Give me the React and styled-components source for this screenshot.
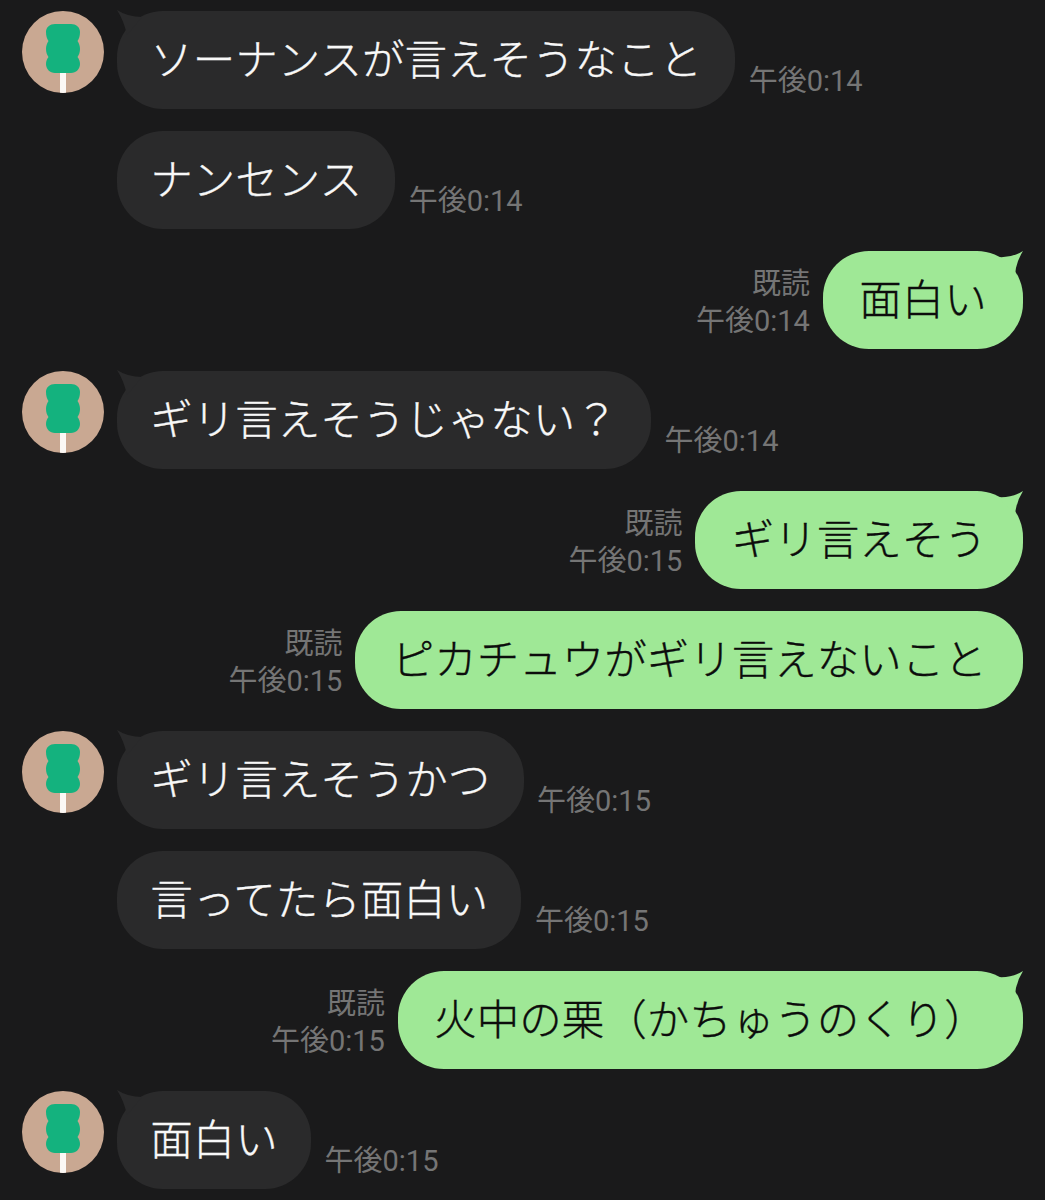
import React from "react";
import styled, { createGlobalStyle } from "styled-components";

const Global = createGlobalStyle`
  html, body { margin: 0; padding: 0; background: #1a1a1b; }
  body { font-family: "Noto Sans CJK JP", "Noto Sans", sans-serif; }
`;

const Chat = styled.div`
  width: 1045px;
  height: 1200px;
  overflow: hidden;
  box-sizing: border-box;
  padding: 11px 22px 0;
  display: flex;
  flex-direction: column;
  gap: 22px;
  background: #1a1a1b;
`;

const Row = styled.div`
  display: flex;
  height: 98px;
  align-items: flex-end;
  justify-content: ${(p) => (p.$mine ? "flex-end" : "flex-start")};
`;

const AvatarSlot = styled.div`
  align-self: flex-start;
  width: 82px;
  height: 82px;
  margin-right: 13px;
  flex: none;
`;

const Bubble = styled.div`
  position: relative;
  box-sizing: border-box;
  height: 98px;
  padding: 0 ${(p) => (p.$mine ? "36.3px" : "33.25px")} 6px;
  display: flex;
  align-items: center;
  border-radius: 46px;
  font-size: 42.5px;
  font-weight: 300;
  -webkit-text-stroke: 0.35px currentColor;
  line-height: 1;
  white-space: nowrap;
  background: ${(p) => (p.$mine ? "#9fe896" : "#2a2a2b")};
  color: ${(p) => (p.$mine ? "#0c0c0c" : "#f8f8f8")};
`;

const Tail = styled.svg`
  position: absolute;
  top: -1px;
  width: 30px;
  height: 26px;
  ${(p) => (p.$mine ? "right: 0;" : "left: 0;")}
`;

const Meta = styled.div`
  font-family: Roboto, "Noto Sans CJK JP", sans-serif;
  font-size: 29px;
  font-weight: 400;
  line-height: 37px;
  color: #757575;
  text-align: right;
  white-space: nowrap;
  padding-bottom: 9px;
  ${(p) => (p.$mine ? "margin-right: 13px;" : "margin-left: 13.5px;")}
`;

const Line = styled.div``;

const Avatar = () => (
  <svg width="82" height="82" viewBox="0 0 82 82">
    <defs>
      <clipPath id="avatar-clip">
        <circle cx="41" cy="41" r="41" />
      </clipPath>
    </defs>
    <g clipPath="url(#avatar-clip)">
      <rect width="82" height="82" fill="#c9a892" />
      <rect x="38" y="60" width="6" height="22" fill="#fbf8f5" />
      <path
        d="M33 13 H49 C54 13 58 16 58 21 C58 25 57 28 55.5 30 C57 32 58 35 58 38 C58 41 57 44 55.5 46 C57 48 58 50 58 53 C58 58 54 62 49 62 H33 C28 62 24 58 24 53 C24 50 25 48 26.5 46 C25 44 24 41 24 38 C24 35 25 32 26.5 30 C25 28 24 25 24 21 C24 16 28 13 33 13 Z"
        fill="#14b27e"
      />
    </g>
  </svg>
);

const TailLeft = () => (
  <Tail viewBox="0 0 30 26">
    <path d="M0 0 Q11 7 25 7 L10 25 Q7 11 0 0 Z" fill="#2a2a2b" />
  </Tail>
);

const TailRight = () => (
  <Tail $mine viewBox="0 0 30 26">
    <path d="M30 1 Q19 8 5 7 L22 25 Q23 12 30 1 Z" fill="#9fe896" />
  </Tail>
);

const messages = [
  { text: "ソーナンスが言えそうなこと", time: "午後0:14", avatar: true },
  { text: "ナンセンス", time: "午後0:14" },
  { text: "面白い", time: "午後0:14", mine: true, tail: true },
  { text: "ギリ言えそうじゃない？", time: "午後0:14", avatar: true },
  { text: "ギリ言えそう", time: "午後0:15", mine: true, tail: true },
  { text: "ピカチュウがギリ言えないこと", time: "午後0:15", mine: true },
  { text: "ギリ言えそうかつ", time: "午後0:15", avatar: true },
  { text: "言ってたら面白い", time: "午後0:15" },
  { text: "火中の栗（かちゅうのくり）", time: "午後0:15", mine: true, tail: true },
  { text: "面白い", time: "午後0:15", avatar: true },
];

export default function App() {
  return (
    <>
      <Global />
      <Chat>
        {messages.map((m, i) =>
          m.mine ? (
            <Row key={i} $mine>
              <Meta $mine>
                <Line>既読</Line>
                <Line>{m.time}</Line>
              </Meta>
              <Bubble $mine>
                {m.tail ? <TailRight /> : null}
                {m.text}
              </Bubble>
            </Row>
          ) : (
            <Row key={i}>
              <AvatarSlot>{m.avatar ? <Avatar /> : null}</AvatarSlot>
              <Bubble>
                {m.avatar ? <TailLeft /> : null}
                {m.text}
              </Bubble>
              <Meta>{m.time}</Meta>
            </Row>
          )
        )}
      </Chat>
    </>
  );
}
